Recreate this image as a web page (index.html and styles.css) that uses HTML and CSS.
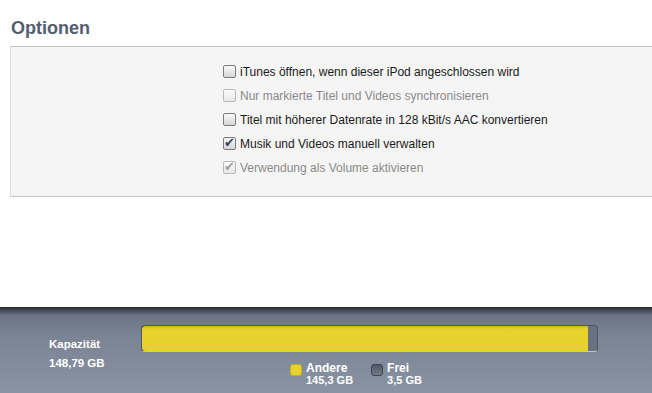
FILE: index.html
```html
<!DOCTYPE html>
<html lang="de">
<head>
  <meta charset="UTF-8" />
  <title>Optionen</title>
  <link rel="stylesheet" href="styles.css">
</head>
<body>

  <div class="content">
    <h2 class="section-title">Optionen</h2>
    <div class="options-box">
      <label class="option"><span class="check"></span>iTunes öffnen, wenn dieser iPod angeschlossen wird</label>
      <label class="option disabled"><span class="check"></span>Nur markierte Titel und Videos synchronisieren</label>
      <label class="option"><span class="check"></span>Titel mit höherer Datenrate in 128 kBit/s AAC konvertieren</label>
      <label class="option"><span class="check checked">&#10004;</span>Musik und Videos manuell verwalten</label>
      <label class="option disabled"><span class="check checked">&#10004;</span>Verwendung als Volume aktivieren</label>
    </div>
  </div>

  <div class="capacity-bar">
    <div class="capacity-label">
      <strong>Kapazität</strong>
      <span>148,79 GB</span>
    </div>
    <div class="capacity-main">
      <div class="meter">
        <div class="meter-fill" style="width: 98%;"></div>
      </div>
      <div class="legend">
        <div class="legend-item">
          <span class="swatch other"></span>
          <div><b>Andere</b><br>145,3 GB</div>
        </div>
        <div class="legend-item">
          <span class="swatch free"></span>
          <div><b>Frei</b><br>3,5 GB</div>
        </div>
      </div>
    </div>
  </div>

</body>
</html>
```

FILE: styles.css
```css
body {
  margin: 0;
  padding: 0;
  width: 652px;
  height: 393px;
  overflow: hidden;
  background: #ffffff;
  font-family: "Liberation Sans", Arial, sans-serif;
  display: flex;
  flex-direction: column;
}
.content {
  height: 307px;
  padding-left: 10px;
}
.section-title {
  margin: 0;
  padding: 17px 0 0 1px;
  height: 46px;
  box-sizing: border-box;
  font-size: 18px;
  line-height: 22px;
  color: #535d70;
  font-weight: bold;
}
.options-box {
  height: 151px;
  box-sizing: border-box;
  background: #f5f5f5;
  border-top: 1px solid #c2c2c2;
  border-bottom: 1px solid #c2c2c2;
  border-left: 1px solid #dcdcdc;
  padding: 16px 0 0 212px;
  display: flex;
  flex-direction: column;
  gap: 7px;
}
.option {
  display: flex;
  align-items: center;
  gap: 4px;
  height: 17px;
  font-size: 12px;
  color: #1a1a1a;
}
.option.disabled {
  color: #8a8a8a;
}
.check {
  width: 11px;
  height: 11px;
  border: 1px solid #7d7d7d;
  border-radius: 2px;
  background: linear-gradient(#f8f8f8, #d6d6d6);
  font-size: 13px;
  line-height: 10px;
  text-align: center;
  color: #34436a;
  overflow: visible;
}
.option.disabled .check {
  border-color: #b8b8b8;
  background: linear-gradient(#fbfbfb, #e8e8e8);
  color: #a0a0a0;
}
.capacity-bar {
  flex: 1;
  background: linear-gradient(#23262c 0px, #4b525e 4px, #6d7687 9px, #7b8495 30px, #8a93a2 86px);
  display: flex;
  padding: 18px 0 0 49px;
  color: #ffffff;
  font-size: 11px;
}
.capacity-label {
  width: 92px;
  padding-top: 13px;
  display: flex;
  flex-direction: column;
  gap: 7px;
  font-size: 11.5px;
}
.capacity-label strong,
.capacity-label span {
  font-weight: bold;
}
.meter {
  width: 457px;
  height: 27px;
  box-sizing: border-box;
  background: linear-gradient(90deg, #3b414c, #6a7282);
  border: 1px solid #4e5563;
  border-bottom-color: #c3c8d0;
  border-radius: 4px;
  overflow: hidden;
}
.meter-fill {
  height: 100%;
  background: linear-gradient(#c9b41d, #e8d32e 3px, #e6d12d);
  border-radius: 3px 0 0 3px;
}
.legend {
  display: flex;
  gap: 18px;
  padding: 10px 0 0 149px;
}
.legend-item {
  display: flex;
  gap: 4px;
  font-weight: bold;
  line-height: 12px;
}
.legend-item b {
  font-size: 12px;
}
.swatch {
  width: 12px;
  height: 12px;
  margin-top: 2px;
  border-radius: 3px;
  box-sizing: border-box;
}
.swatch.other {
  background: #e8d22e;
  border: 1px solid #c5b021;
}
.swatch.free {
  background: linear-gradient(#505766, #707888);
  border: 1px solid #3e4450;
}
```
